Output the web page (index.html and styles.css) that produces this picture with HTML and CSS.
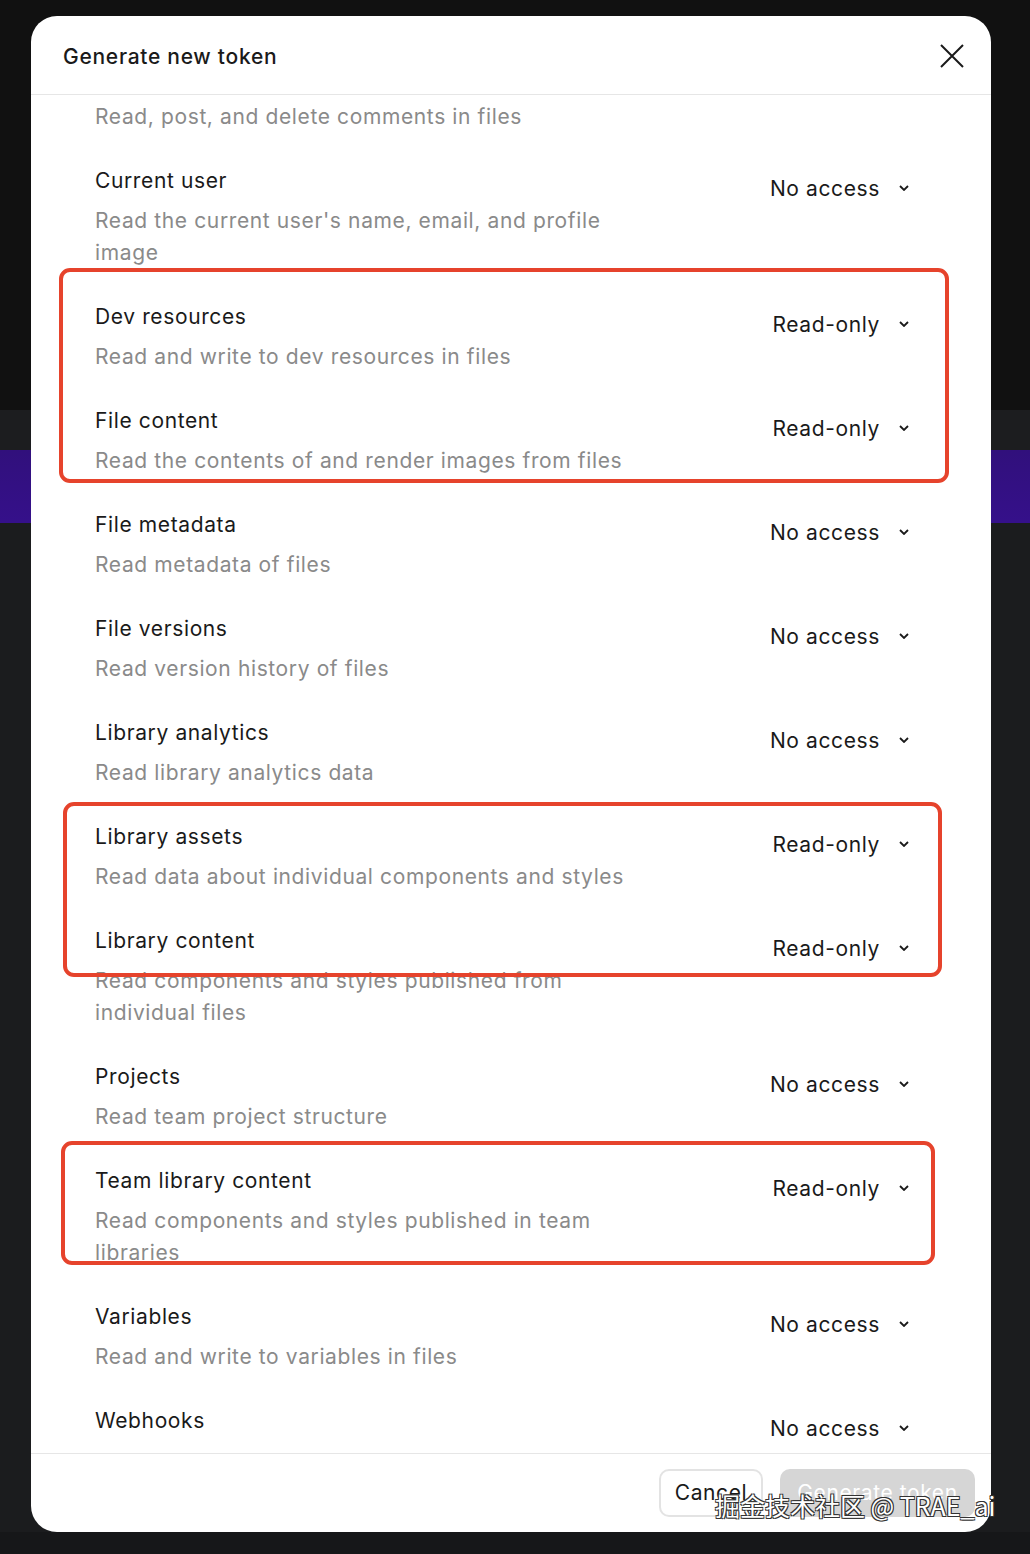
FILE: index.html
```html
<!DOCTYPE html>
<html lang="en">
<head>
<meta charset="utf-8">
<title>Generate new token</title>
<link rel="stylesheet" href="styles.css">
</head>
<body>
<div class="page">
  <div class="modal">
    <div class="modal-header">
      <h1 class="modal-title">Generate new token</h1>
      <button class="close-btn" aria-label="Close">
        <svg width="24" height="24" viewBox="0 0 24 24"><path d="M1 1L23 23M23 1L1 23" stroke="#1a1a1a" stroke-width="2" fill="none"/></svg>
      </button>
    </div>
    <div class="modal-body">
      <div class="scope-list">
        <div class="scope partial">
          <p class="scope-desc">Read, post, and delete comments in files</p>
        </div>
        <div class="scope">
          <div class="scope-text"><p class="scope-name">Current user</p><p class="scope-desc">Read the current user's name, email, and profile image</p></div>
          <div class="select"><span>No access</span><svg class="chev" width="10" height="6" viewBox="0 0 10 6"><path d="M1 1L5 5L9 1" stroke="#1a1a1a" stroke-width="1.8" fill="none"/></svg></div>
        </div>
        <div class="scope">
          <div class="scope-text"><p class="scope-name">Dev resources</p><p class="scope-desc">Read and write to dev resources in files</p></div>
          <div class="select ro"><span>Read-only</span><svg class="chev" width="10" height="6" viewBox="0 0 10 6"><path d="M1 1L5 5L9 1" stroke="#1a1a1a" stroke-width="1.8" fill="none"/></svg></div>
        </div>
        <div class="scope">
          <div class="scope-text"><p class="scope-name">File content</p><p class="scope-desc">Read the contents of and render images from files</p></div>
          <div class="select ro"><span>Read-only</span><svg class="chev" width="10" height="6" viewBox="0 0 10 6"><path d="M1 1L5 5L9 1" stroke="#1a1a1a" stroke-width="1.8" fill="none"/></svg></div>
        </div>
        <div class="scope">
          <div class="scope-text"><p class="scope-name">File metadata</p><p class="scope-desc">Read metadata of files</p></div>
          <div class="select"><span>No access</span><svg class="chev" width="10" height="6" viewBox="0 0 10 6"><path d="M1 1L5 5L9 1" stroke="#1a1a1a" stroke-width="1.8" fill="none"/></svg></div>
        </div>
        <div class="scope">
          <div class="scope-text"><p class="scope-name">File versions</p><p class="scope-desc">Read version history of files</p></div>
          <div class="select"><span>No access</span><svg class="chev" width="10" height="6" viewBox="0 0 10 6"><path d="M1 1L5 5L9 1" stroke="#1a1a1a" stroke-width="1.8" fill="none"/></svg></div>
        </div>
        <div class="scope">
          <div class="scope-text"><p class="scope-name">Library analytics</p><p class="scope-desc">Read library analytics data</p></div>
          <div class="select"><span>No access</span><svg class="chev" width="10" height="6" viewBox="0 0 10 6"><path d="M1 1L5 5L9 1" stroke="#1a1a1a" stroke-width="1.8" fill="none"/></svg></div>
        </div>
        <div class="scope">
          <div class="scope-text"><p class="scope-name">Library assets</p><p class="scope-desc">Read data about individual components and styles</p></div>
          <div class="select ro"><span>Read-only</span><svg class="chev" width="10" height="6" viewBox="0 0 10 6"><path d="M1 1L5 5L9 1" stroke="#1a1a1a" stroke-width="1.8" fill="none"/></svg></div>
        </div>
        <div class="scope">
          <div class="scope-text"><p class="scope-name">Library content</p><p class="scope-desc">Read components and styles published from individual files</p></div>
          <div class="select ro"><span>Read-only</span><svg class="chev" width="10" height="6" viewBox="0 0 10 6"><path d="M1 1L5 5L9 1" stroke="#1a1a1a" stroke-width="1.8" fill="none"/></svg></div>
        </div>
        <div class="scope">
          <div class="scope-text"><p class="scope-name">Projects</p><p class="scope-desc">Read team project structure</p></div>
          <div class="select"><span>No access</span><svg class="chev" width="10" height="6" viewBox="0 0 10 6"><path d="M1 1L5 5L9 1" stroke="#1a1a1a" stroke-width="1.8" fill="none"/></svg></div>
        </div>
        <div class="scope">
          <div class="scope-text"><p class="scope-name">Team library content</p><p class="scope-desc">Read components and styles published in team libraries</p></div>
          <div class="select ro"><span>Read-only</span><svg class="chev" width="10" height="6" viewBox="0 0 10 6"><path d="M1 1L5 5L9 1" stroke="#1a1a1a" stroke-width="1.8" fill="none"/></svg></div>
        </div>
        <div class="scope">
          <div class="scope-text"><p class="scope-name">Variables</p><p class="scope-desc">Read and write to variables in files</p></div>
          <div class="select"><span>No access</span><svg class="chev" width="10" height="6" viewBox="0 0 10 6"><path d="M1 1L5 5L9 1" stroke="#1a1a1a" stroke-width="1.8" fill="none"/></svg></div>
        </div>
        <div class="scope">
          <div class="scope-text"><p class="scope-name">Webhooks</p></div>
          <div class="select"><span>No access</span><svg class="chev" width="10" height="6" viewBox="0 0 10 6"><path d="M1 1L5 5L9 1" stroke="#1a1a1a" stroke-width="1.8" fill="none"/></svg></div>
        </div>
      </div>
    </div>
    <div class="modal-footer">
      <button class="btn btn-secondary">Cancel</button>
      <button class="btn btn-primary" disabled>Generate token</button>
    </div>
    <div class="mark mark-1"></div>
    <div class="mark mark-2"></div>
    <div class="mark mark-3"></div>
  </div>
  <div class="watermark">掘金技术社区 @ TRAE_ai</div>
</div>
</body>
</html>
```

FILE: styles.css
```css
* { box-sizing: border-box; }
html, body { margin: 0; padding: 0; }
body {
  width: 1030px;
  height: 1554px;
  overflow: hidden;
  font-family: Inter, "Noto Sans", "Liberation Sans", sans-serif;
  background:
    linear-gradient(to bottom, #111111 0, #111111 410px, #1c1d1f 410px, #1c1d1f 450px, #31107c 450px, #35108a 523px, #1b1c1e 523px, #1b1c1e 1532px, #161719 1532px);
}
.page {
  position: relative;
  width: 1030px;
  height: 1554px;
  padding: 16px 39px 22px 31px;
}
.modal {
  position: relative;
  width: 960px;
  height: 1516px;
  background: #fff;
  border-radius: 26px;
  display: flex;
  flex-direction: column;
  overflow: hidden;
}
.modal-header {
  height: 79px;
  flex: none;
  display: flex;
  align-items: center;
  justify-content: space-between;
  padding: 2px 27px 0 32px;
  border-bottom: 1px solid #e6e6e6;
}
.modal-title {
  margin: 0;
  font-size: 21px;
  font-weight: 500;
  color: #1a1a1a;
  letter-spacing: 0.72px;
}
.close-btn {
  border: 0;
  background: none;
  padding: 0;
  width: 24px;
  height: 24px;
  display: flex;
}
.modal-body {
  flex: 1;
  overflow: hidden;
}
.scope-list {
  padding: 0 82px 0 64px;
}
.scope {
  display: flex;
  justify-content: space-between;
  align-items: flex-start;
  padding-bottom: 31px;
}
.scope.partial { padding-top: 6px; }
.scope-text { max-width: 548px; padding-top: 1px; }
.scope-name, .scope-desc {
  margin: 0;
  font-size: 21px;
  line-height: 32px;
  letter-spacing: 0.62px;
}
.scope-name { color: #1a1a1a; }
.scope-desc { color: #8a8a8a; margin-top: 8px; }
.partial .scope-desc { margin-top: 0; }
.select {
  height: 48px;
  display: flex;
  align-items: center;
  gap: 19px;
  font-size: 21px;
  color: #1a1a1a;
  letter-spacing: 0.62px;
  flex: none;
}
.chev { flex: none; }
.modal-footer {
  flex: none;
  height: 79px;
  border-top: 1px solid #e6e6e6;
  display: flex;
  align-items: center;
  justify-content: flex-end;
  gap: 17px;
  padding: 0 16px 1px 0;
}
.btn {
  height: 48px;
  border-radius: 10px;
  font-family: inherit;
  font-size: 21px;
  letter-spacing: 0.6px;
  padding: 0 12px;
}
.btn-secondary {
  width: 104px;
  background: #fff;
  color: #1a1a1a;
  border: 2px solid #e3e3e3;
}
.btn-primary {
  width: 195px;
  background: #d6d6d6;
  color: #fff;
  border: 0;
}
.mark {
  position: absolute;
  border: 4px solid #e6432c;
  border-radius: 11px;
  pointer-events: none;
}
.mark-1 { left: 28px; top: 252px; width: 890px; height: 215px; }
.mark-2 { left: 32px; top: 786px; width: 879px; height: 175px; }
.mark-3 { left: 30px; top: 1125px; width: 874px; height: 124px; }
.watermark {
  position: absolute;
  left: 715px;
  top: 1488px;
  font-family: "Noto Sans CJK SC", "Liberation Sans", sans-serif;
  font-size: 25px;
  line-height: 34px;
  color: #fff;
  white-space: nowrap;
  text-shadow: -1px -1px 0 #333, 1px -1px 0 #333, -1px 1px 0 #333, 1px 1px 0 #333;
}
```
